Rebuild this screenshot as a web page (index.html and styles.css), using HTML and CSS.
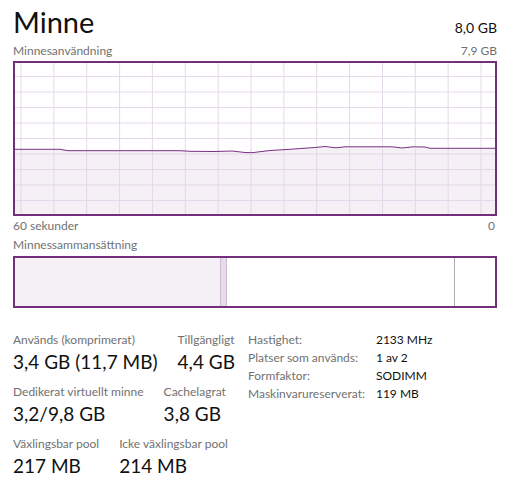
FILE: index.html
```html
<!DOCTYPE html>
<html lang="sv">
<head>
<meta charset="utf-8">
<title>Minne</title>
<link rel="stylesheet" href="styles.css">
</head>
<body>
<div class="page">
  <div class="header">
    <div class="title">Minne</div>
    <div class="total">8,0 GB</div>
  </div>
  <div class="caption-row top-caption">
    <span>Minnesanvändning</span>
    <span>7,9 GB</span>
  </div>
  <svg class="graph" width="484" height="155" viewBox="0 0 484 155">
    <g class="grid">
      <line x1="8" y1="0" x2="8" y2="155"/>
      <line x1="40.9" y1="0" x2="40.9" y2="155"/>
      <line x1="73.7" y1="0" x2="73.7" y2="155"/>
      <line x1="106.6" y1="0" x2="106.6" y2="155"/>
      <line x1="139.4" y1="0" x2="139.4" y2="155"/>
      <line x1="172.3" y1="0" x2="172.3" y2="155"/>
      <line x1="205.2" y1="0" x2="205.2" y2="155"/>
      <line x1="238" y1="0" x2="238" y2="155"/>
      <line x1="270.9" y1="0" x2="270.9" y2="155"/>
      <line x1="303.7" y1="0" x2="303.7" y2="155"/>
      <line x1="336.6" y1="0" x2="336.6" y2="155"/>
      <line x1="369.5" y1="0" x2="369.5" y2="155"/>
      <line x1="402.3" y1="0" x2="402.3" y2="155"/>
      <line x1="435.2" y1="0" x2="435.2" y2="155"/>
      <line x1="468" y1="0" x2="468" y2="155"/>
      <line x1="0" y1="15.5" x2="484" y2="15.5"/>
      <line x1="0" y1="31" x2="484" y2="31"/>
      <line x1="0" y1="46.5" x2="484" y2="46.5"/>
      <line x1="0" y1="62" x2="484" y2="62"/>
      <line x1="0" y1="77.5" x2="484" y2="77.5"/>
      <line x1="0" y1="93" x2="484" y2="93"/>
      <line x1="0" y1="108.5" x2="484" y2="108.5"/>
      <line x1="0" y1="124" x2="484" y2="124"/>
      <line x1="0" y1="139.5" x2="484" y2="139.5"/>
    </g>
    <path class="fill" d="M0,88.3 L47,88.3 L55,89.7 L167,89.7 L177,90.3 L202,90.5 L219,90 L232,91.5 L239,91.7 L257,89.5 L277,88.3 L302,86.5 L312,85.5 L323,86.8 L332,85.8 L379,85.8 L389,87 L400,85.8 L412,86 L417,87.3 L484,87.3 L484,155 L0,155 Z"/>
    <g class="grid grid-over">
      <line x1="8" y1="88" x2="8" y2="155"/>
      <line x1="40.9" y1="88" x2="40.9" y2="155"/>
      <line x1="73.7" y1="88" x2="73.7" y2="155"/>
      <line x1="106.6" y1="88" x2="106.6" y2="155"/>
      <line x1="139.4" y1="88" x2="139.4" y2="155"/>
      <line x1="172.3" y1="88" x2="172.3" y2="155"/>
      <line x1="205.2" y1="88" x2="205.2" y2="155"/>
      <line x1="238" y1="88" x2="238" y2="155"/>
      <line x1="270.9" y1="88" x2="270.9" y2="155"/>
      <line x1="303.7" y1="88" x2="303.7" y2="155"/>
      <line x1="336.6" y1="88" x2="336.6" y2="155"/>
      <line x1="369.5" y1="88" x2="369.5" y2="155"/>
      <line x1="402.3" y1="88" x2="402.3" y2="155"/>
      <line x1="435.2" y1="88" x2="435.2" y2="155"/>
      <line x1="468" y1="88" x2="468" y2="155"/>
      <line x1="0" y1="93" x2="484" y2="93"/>
      <line x1="0" y1="108.5" x2="484" y2="108.5"/>
      <line x1="0" y1="124" x2="484" y2="124"/>
      <line x1="0" y1="139.5" x2="484" y2="139.5"/>
    </g>
    <path class="line" d="M0,88.3 L47,88.3 L55,89.7 L167,89.7 L177,90.3 L202,90.5 L219,90 L232,91.5 L239,91.7 L257,89.5 L277,88.3 L302,86.5 L312,85.5 L323,86.8 L332,85.8 L379,85.8 L389,87 L400,85.8 L412,86 L417,87.3 L484,87.3"/>
    <rect class="frame" x="1" y="1" width="482" height="153"/>
  </svg>
  <div class="caption-row">
    <span>60 sekunder</span>
    <span class="zero">0</span>
  </div>
  <div class="caption-row comp-caption">
    <span>Minnessammansättning</span>
  </div>
  <div class="composition">
    <div class="seg in-use"></div>
    <div class="seg modified"></div>
    <div class="seg standby"></div>
    <div class="seg free"></div>
  </div>
  <div class="stats">
    <div class="main-stats">
      <div class="stat-row">
        <div class="stat">
          <div class="label">Används (komprimerat)</div>
          <div class="value">3,4 GB (11,7 MB)</div>
        </div>
        <div class="stat">
          <div class="label">Tillgängligt</div>
          <div class="value">4,4 GB</div>
        </div>
      </div>
      <div class="stat-row">
        <div class="stat">
          <div class="label">Dedikerat virtuellt minne</div>
          <div class="value">3,2/9,8 GB</div>
        </div>
        <div class="stat">
          <div class="label">Cachelagrat</div>
          <div class="value">3,8 GB</div>
        </div>
      </div>
      <div class="stat-row">
        <div class="stat">
          <div class="label">Växlingsbar pool</div>
          <div class="value">217 MB</div>
        </div>
        <div class="stat">
          <div class="label">Icke växlingsbar pool</div>
          <div class="value">214 MB</div>
        </div>
      </div>
    </div>
    <div class="details">
      <span class="dlabel">Hastighet:</span><span class="dvalue">2133 MHz</span>
      <span class="dlabel">Platser som används:</span><span class="dvalue">1 av 2</span>
      <span class="dlabel">Formfaktor:</span><span class="dvalue">SODIMM</span>
      <span class="dlabel">Maskinvarureserverat:</span><span class="dvalue">119 MB</span>
    </div>
  </div>
</div>
</body>
</html>
```
FILE: styles.css
```css
html, body {
  margin: 0;
  padding: 0;
  background: #ffffff;
}

body {
  font-family: Lato, "Noto Sans", sans-serif;
  color: #000000;
}

.page {
  width: 484px;
  padding: 0 13px 0 13px;
}

.header {
  display: flex;
  justify-content: space-between;
  align-items: baseline;
  padding-top: 4px;
  height: 36px;
}

.title {
  font-size: 29px;
  line-height: 36px;
  color: #111111;
}

.total {
  font-size: 14px;
  line-height: 18px;
  color: #111111;
}

.caption-row {
  display: flex;
  justify-content: space-between;
  font-size: 12px;
  line-height: 14px;
  height: 14px;
  color: #717171;
}

.zero {
  padding-right: 2px;
}

.top-caption {
  margin-top: 4px;
  margin-bottom: 3px;
}

.graph {
  display: block;
  margin-bottom: 3px;
}

.grid line {
  stroke: #e5d9e9;
  stroke-width: 1;
}

.grid-over line {
  stroke: #e6d6e9;
}

.fill {
  fill: #f4f0f5;
}

.line {
  fill: none;
  stroke: #7d3086;
  stroke-width: 1;
}

.frame {
  fill: none;
  stroke: #72307a;
  stroke-width: 2;
}

.comp-caption {
  margin-top: 5px;
  margin-bottom: 4px;
}

.composition {
  display: flex;
  height: 48px;
  border: 2px solid #72307a;
}

.seg {
  height: 100%;
}

.in-use {
  width: 205px;
  background: #f4f0f5;
}

.modified {
  width: 5px;
  background: #e7dcea;
  border-left: 1px solid #cdb9d2;
  border-right: 1px solid #cdb9d2;
}

.standby {
  width: 227px;
  background: #ffffff;
  border-right: 1px solid #b1a9b5;
}

.free {
  flex: 1;
  background: #ffffff;
}

.stats {
  display: flex;
  margin-top: 23px;
}

.main-stats {
  width: 235px;
  display: flex;
  flex-direction: column;
  gap: 10px;
  padding-top: 1px;
}

.stat-row {
  display: flex;
  gap: 20px;
}

.label {
  font-size: 12px;
  line-height: 16px;
  color: #717171;
  white-space: nowrap;
}

.value {
  font-size: 19px;
  line-height: 24px;
  margin-top: 2px;
  color: #111111;
  white-space: nowrap;
}

.details {
  display: grid;
  grid-template-columns: auto auto;
  column-gap: 11px;
  align-content: start;
  font-size: 12px;
  line-height: 18px;
}

.dlabel {
  color: #717171;
  white-space: nowrap;
}

.dvalue {
  color: #111111;
  white-space: nowrap;
}
```
